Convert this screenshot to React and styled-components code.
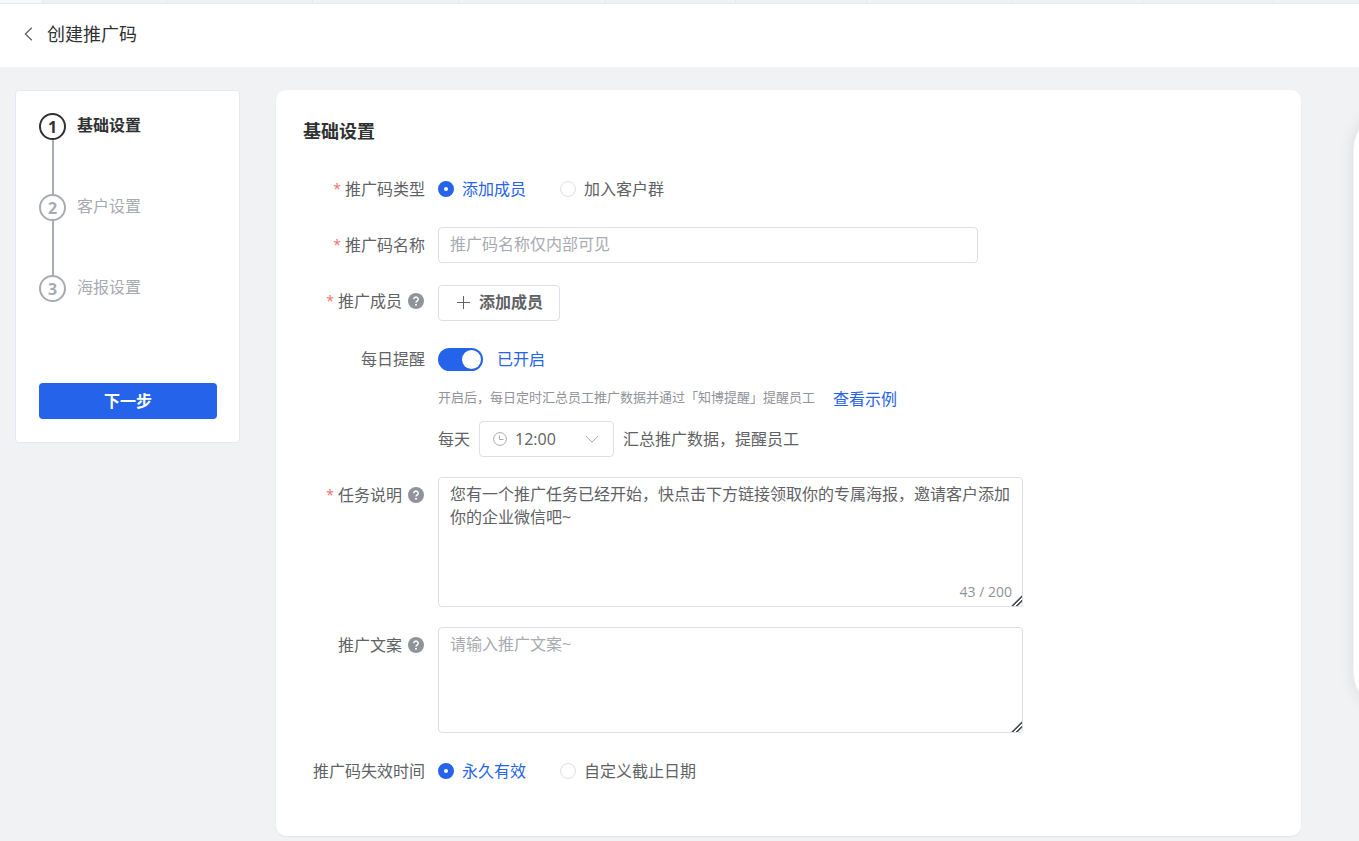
import { useState } from 'react';
import styled, { createGlobalStyle } from 'styled-components';

const GlobalStyle = createGlobalStyle`
  * {
    box-sizing: border-box;
  }

  body {
    margin: 0;
    background: #f1f2f4;
    color: #606266;
    font-family: 'Open Sans', 'Noto Sans CJK SC', sans-serif;
    font-size: 16px;
    line-height: 24px;
  }

  button,
  input,
  select,
  textarea {
    font: inherit;
    color: inherit;
  }
`;

const Page = styled.div`
  position: relative;
  min-height: 100vh;
  display: flex;
  flex-direction: column;
  overflow: hidden;
`;

const TabStrip = styled.div`
  display: flex;
  height: 4px;
  background: #f1f2f4;
  border-bottom: 1px solid #e4e7ed;
`;

const TabEdge = styled.span`
  flex: 0 1 ${({ $size }) => $size}px;
  background: ${({ $active }) => ($active ? '#f8f9fb' : 'transparent')};
  border-right: 1px solid #e4e7ed;
`;

const Header = styled.header`
  display: flex;
  align-items: center;
  gap: 13px;
  height: 63px;
  padding: 0 23px 3px;
  background: #fff;
`;

const BackButton = styled.button`
  display: flex;
  padding: 0;
  border: 0;
  background: none;
  cursor: pointer;
`;

const PageTitle = styled.h1`
  margin: 0;
  color: #303133;
  font-size: 18px;
  font-weight: 400;
`;

const Body = styled.main`
  flex: 1;
  display: flex;
  align-items: flex-start;
  gap: 36px;
  padding: 23px 58px 5px 15px;
`;

const Sidebar = styled.aside`
  flex: 0 0 225px;
  padding: 22px 22px 23px 23px;
  border: 1px solid #e4e7ed;
  border-radius: 4px;
  background: #fff;
`;

const Steps = styled.ol`
  margin: 0 0 27px;
  padding: 0;
  list-style: none;
`;

const Step = styled.li`
  display: flex;
  gap: 11px;
  height: 81px;
  color: ${({ $active }) => ($active ? '#303133' : '#a8abb2')};
  font-weight: ${({ $active }) => ($active ? 700 : 400)};
`;

const StepMark = styled.div`
  display: flex;
  flex-direction: column;
  align-items: center;
`;

const StepNumber = styled.span`
  display: flex;
  align-items: center;
  justify-content: center;
  width: 27px;
  height: 27px;
  border: 2px solid currentColor;
  border-radius: 50%;
  font-weight: 700;
`;

const StepLine = styled.span`
  flex: 1;
  width: 2px;
  background: #a8abb2;
`;

const NextButton = styled.button`
  display: block;
  width: 100%;
  height: 36px;
  padding: 0;
  border: 0;
  border-radius: 4px;
  background: #2563eb;
  color: #fff;
  font-weight: 700;
  cursor: pointer;
`;

const Card = styled.section`
  flex: 1;
  min-width: 0;
  padding: 28px 27px 47px;
  border-radius: 10px;
  background: #fff;
  box-shadow: 0 1px 2px rgba(0, 0, 0, 0.06);
`;

const CardTitle = styled.h2`
  margin: 0 0 27px;
  color: #303133;
  font-size: 18px;
  font-weight: 700;
  line-height: 26px;
`;

const Form = styled.form`
  display: flex;
  flex-direction: column;
  gap: 20px;
`;

const Row = styled.div`
  display: flex;
  align-items: flex-start;
`;

const Label = styled.label`
  flex: 0 0 135px;
  display: flex;
  align-items: center;
  justify-content: flex-end;
  height: 36px;
  padding-right: 13px;
  white-space: nowrap;
`;

const Star = styled.span`
  margin-right: 4px;
  color: #f56c6c;
  font-size: 14px;
`;

const HelpIcon = styled.svg`
  flex: none;
  margin: 0 1px 0 6px;
`;

const Control = styled.div`
  flex: 1;
  min-width: 0;
`;

const Line = styled.div`
  display: flex;
  align-items: center;
  min-height: ${({ $height }) => $height || 36}px;
`;

const RadioLabel = styled.label`
  display: flex;
  align-items: center;
  gap: 8px;
  margin-right: 34px;
  color: ${({ $checked }) => ($checked ? '#2563eb' : '#606266')};
`;

const Radio = styled.input`
  appearance: none;
  width: 16px;
  height: 16px;
  margin: 0;
  border: 1px solid #dcdfe6;
  border-radius: 50%;
  background: #fff;

  &:checked {
    border: 6px solid #2563eb;
  }
`;

const TextInput = styled.input`
  display: block;
  width: 100%;
  max-width: 540px;
  height: 36px;
  padding: 0 11px 2px;
  border: 1px solid #dcdfe6;
  border-radius: 4px;
  background: #fff;

  &::placeholder {
    color: #a8abb2;
  }
`;

const AddButton = styled.button`
  display: flex;
  align-items: center;
  gap: 8px;
  height: 36px;
  margin-top: 2px;
  padding: 0 16px 2px 17px;
  border: 1px solid #dcdfe6;
  border-radius: 4px;
  background: #fff;
  font-weight: 700;
  cursor: pointer;
`;

const Switch = styled.input`
  appearance: none;
  width: 45px;
  height: 23px;
  margin: 0 14px 0 0;
  padding: 2px;
  border-radius: 12px;
  background: ${({ checked }) => (checked ? '#2563eb' : '#dcdfe6')};
  cursor: pointer;

  &::before {
    content: '';
    display: block;
    width: 19px;
    height: 19px;
    margin-left: ${({ checked }) => (checked ? 'auto' : '0')};
    border-radius: 50%;
    background: #fff;
  }
`;

const SwitchText = styled.span`
  color: ${({ $on }) => ($on ? '#2563eb' : '#606266')};
`;

const Hint = styled.span`
  color: #909399;
  font-size: 13px;
`;

const ExampleLink = styled.a`
  margin-left: 18px;
  padding-top: 3px;
  color: #2563eb;
  text-decoration: none;
`;

const TimeLine = styled(Line)`
  gap: 9px;
  margin-top: 4px;
`;

const TimeBox = styled.div`
  position: relative;
  width: 135px;
`;

const TimeSelect = styled.select`
  appearance: none;
  display: block;
  width: 100%;
  height: 36px;
  padding: 0 30px 0 35px;
  border: 1px solid #dcdfe6;
  border-radius: 4px;
  background: #fff;
`;

const TimeIcons = styled.span`
  position: absolute;
  inset: 0;
  display: flex;
  align-items: center;
  justify-content: space-between;
  padding: 0 15px 0 14px;
  color: #a8abb2;
  pointer-events: none;
`;

const AreaBox = styled.div`
  position: relative;
  width: 100%;
  max-width: 585px;
`;

const TextArea = styled.textarea`
  display: block;
  width: 100%;
  height: ${({ $height }) => $height}px;
  padding: 5px 11px;
  border: 1px solid #dcdfe6;
  border-radius: 4px;
  background: #fff;
  line-height: 23px;
  resize: vertical;

  &::placeholder {
    color: #a8abb2;
  }

  &::-webkit-resizer {
    background: linear-gradient(
      135deg,
      transparent 63%,
      #505256 64%,
      #505256 70%,
      transparent 71%,
      transparent 79%,
      #505256 80%,
      #505256 86%,
      transparent 87%
    );
  }
`;

const Counter = styled.span`
  position: absolute;
  right: 11px;
  bottom: 3px;
  color: #909399;
  font-size: 14px;
`;

const PreviewEdge = styled.div`
  position: absolute;
  top: 110px;
  left: calc(100% - 6px);
  width: 300px;
  height: 602px;
  border: 1px solid #f5f5f6;
  border-radius: 40px;
  background: #fff;
  box-shadow: 0 0 16px rgba(0, 0, 0, 0.1);
`;

const Help = () => (
  <HelpIcon width="16" height="16" viewBox="0 0 16 16" aria-hidden="true">
    <circle cx="8" cy="8" r="8" fill="#909399" />
    <path d="M5.8 6.3a2.2 2.1 0 1 1 3.4 1.7c-.8.5-1.2.8-1.2 1.6" fill="none" stroke="#fff" strokeWidth="1.5" />
    <circle cx="8" cy="11.7" r="1" fill="#fff" />
  </HelpIcon>
);

const tabs = [43, 124, 146, 146, 147, 130, 131, 146, 130, 131];

const steps = ['基础设置', '客户设置', '海报设置'];

const RadioGroup = ({ name, options, value, onChange }) => (
  <Line role="radiogroup">
    {options.map((option) => (
      <RadioLabel key={option} $checked={option === value}>
        <Radio type="radio" name={name} checked={option === value} onChange={() => onChange(option)} />
        {option}
      </RadioLabel>
    ))}
  </Line>
);

const App = () => {
  const [type, setType] = useState('添加成员');
  const [expiry, setExpiry] = useState('永久有效');
  const [remind, setRemind] = useState(true);
  const [task, setTask] = useState(
    '您有一个推广任务已经开始，快点击下方链接领取你的专属海报，邀请客户添加你的企业微信吧~'
  );

  return (
    <Page>
      <GlobalStyle />
      <TabStrip>
        {tabs.map((size, index) => (
          <TabEdge key={index} $size={size} $active={index === 0} />
        ))}
      </TabStrip>
      <Header>
        <BackButton type="button" aria-label="返回">
          <svg width="11" height="16" viewBox="0 0 11 16" fill="none" stroke="#606266" strokeWidth="1.3">
            <path d="M8.8 1.8 2.4 8l6.4 6.2" />
          </svg>
        </BackButton>
        <PageTitle>创建推广码</PageTitle>
      </Header>

      <Body>
        <Sidebar>
          <Steps>
            {steps.map((step, index) => (
              <Step key={step} $active={index === 0}>
                <StepMark>
                  <StepNumber>{index + 1}</StepNumber>
                  {index < steps.length - 1 && <StepLine />}
                </StepMark>
                <span>{step}</span>
              </Step>
            ))}
          </Steps>
          <NextButton type="button">下一步</NextButton>
        </Sidebar>

        <Card>
          <CardTitle>基础设置</CardTitle>
          <Form>
            <Row>
              <Label as="span"><Star>*</Star>推广码类型</Label>
              <Control>
                <RadioGroup name="type" options={['添加成员', '加入客户群']} value={type} onChange={setType} />
              </Control>
            </Row>
            <Row>
              <Label htmlFor="name"><Star>*</Star>推广码名称</Label>
              <Control>
                <TextInput id="name" type="text" placeholder="推广码名称仅内部可见" />
              </Control>
            </Row>
            <Row>
              <Label htmlFor="members"><Star>*</Star>推广成员<Help /></Label>
              <Control>
                <AddButton id="members" type="button">
                  <svg width="15" height="15" viewBox="0 0 15 15" stroke="#606266" strokeWidth="1">
                    <path d="M7.5 1v13M1 7.5h13" />
                  </svg>
                  添加成员
                </AddButton>
              </Control>
            </Row>
            <Row>
              <Label htmlFor="remind">每日提醒</Label>
              <Control>
                <Line>
                  <Switch
                    id="remind"
                    type="checkbox"
                    role="switch"
                    checked={remind}
                    onChange={(e) => setRemind(e.target.checked)}
                  />
                  <SwitchText $on={remind}>{remind ? '已开启' : '已关闭'}</SwitchText>
                </Line>
                <Line $height={40}>
                  <Hint>开启后，每日定时汇总员工推广数据并通过「知博提醒」提醒员工</Hint>
                  <ExampleLink href="#example">查看示例</ExampleLink>
                </Line>
                <TimeLine>
                  <label htmlFor="time">每天</label>
                  <TimeBox>
                    <TimeSelect id="time" defaultValue="12:00">
                      <option>09:00</option>
                      <option>12:00</option>
                      <option>18:00</option>
                    </TimeSelect>
                    <TimeIcons>
                      <svg width="14" height="14" viewBox="0 0 14 14" fill="none" stroke="currentColor">
                        <circle cx="7" cy="7" r="6.4" />
                        <path d="M6.5 3.5v4h4" />
                      </svg>
                      <svg width="14" height="14" viewBox="0 0 14 14" fill="none" stroke="currentColor">
                        <path d="m1 4.2 6 5.8 6-5.8" />
                      </svg>
                    </TimeIcons>
                  </TimeBox>
                  <span>汇总推广数据，提醒员工</span>
                </TimeLine>
              </Control>
            </Row>
            <Row>
              <Label htmlFor="task"><Star>*</Star>任务说明<Help /></Label>
              <Control>
                <AreaBox>
                  <TextArea
                    id="task"
                    $height={130}
                    maxLength={200}
                    value={task}
                    onChange={(e) => setTask(e.target.value)}
                  />
                  <Counter>{task.length} / 200</Counter>
                </AreaBox>
              </Control>
            </Row>
            <Row>
              <Label htmlFor="copy">推广文案<Help /></Label>
              <Control>
                <AreaBox>
                  <TextArea id="copy" $height={106} placeholder="请输入推广文案~" />
                </AreaBox>
              </Control>
            </Row>
            <Row>
              <Label as="span">推广码失效时间</Label>
              <Control>
                <RadioGroup
                  name="expiry"
                  options={['永久有效', '自定义截止日期']}
                  value={expiry}
                  onChange={setExpiry}
                />
              </Control>
            </Row>
          </Form>
        </Card>
      </Body>
      <PreviewEdge />
    </Page>
  );
};

export default App;
